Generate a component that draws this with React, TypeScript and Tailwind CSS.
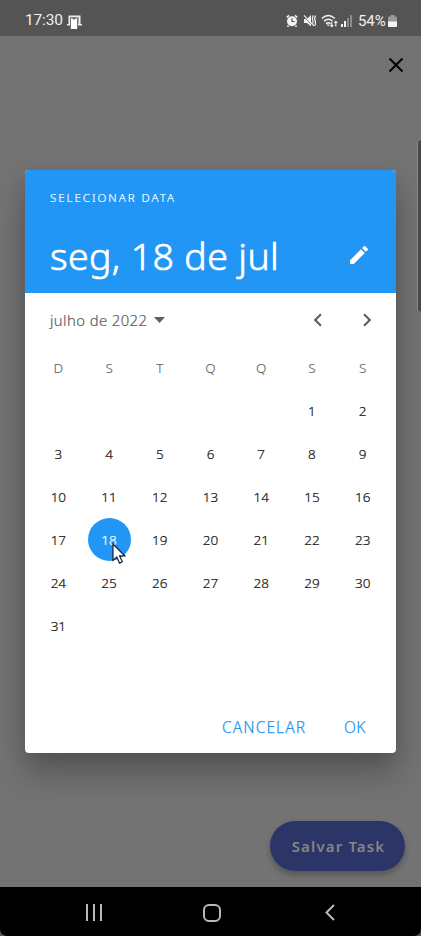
import React from "react";

const weekDays = ["D", "S", "T", "Q", "Q", "S", "S"];
const cells: (number | null)[] = [
  ...Array(5).fill(null),
  ...Array.from({ length: 31 }, (_, i) => i + 1),
];

function StatusBar() {
  return (
    <header className="flex h-9 items-center bg-[#545454] pt-[6px] font-['Roboto',sans-serif] text-[15.5px] leading-none text-[#f0f0f0]">
      <span className="ml-[25px] w-[37px] whitespace-nowrap tracking-[-0.15px]">17:30</span>
      <svg className="ml-[5px] mt-[3px] h-[15px] w-[15px]" viewBox="0 0 15 15">
        <path d="M1.500 .5h12v8.500H15v1.500H0V9h1.500z" fill="#eee" />
        <path d="M3 2h9v7H3z" fill="#b5b5b5" />
        <path d="M3 2.500h8V15H3z" fill="#545454" />
        <path d="M3.800 3.300h1.800v1h2.800v-1h1.800v10.800H3.800z" fill="#fff" />
      </svg>
      <svg className="ml-auto h-[14px] w-[12px]" viewBox="0 0 12 14">
        <circle cx="6" cy="7.3" r="5" fill="#f4f4f4" />
        <path d="M.8 3.4 3 1.4M11.2 3.4 9 1.4M2.5 11.5l-1 1.3M9.5 11.5l1 1.3" stroke="#f4f4f4" strokeWidth="1.6" />
        <path d="M6 4.3v3.2h2.6" stroke="#545454" strokeWidth="1.2" fill="none" />
      </svg>
      <svg className="ml-[5px] h-[14px] w-[13px]" viewBox="0 0 13 14" fill="none" stroke="#f4f4f4">
        <path d="M1 5h3l4-4v11.500L4 9H1z" fill="#f4f4f4" stroke="none" />
        <path d="M.5 2.200l9.500 9.500" stroke="#545454" strokeWidth="1" />
        <path d="M1 1.300l10 10.500" strokeWidth="1.2" />
        <path d="M9.500 1.500c1.500 1.300-.7 2.500 0 4s1.200 2.500 0 4M12 1.500c1 1.300-1 2.500-.2 4s1 3.500 0 6.500" strokeWidth="1.200" />
      </svg>
      <svg className="ml-[5px] h-[14px] w-[17px]" viewBox="0 0 17 14" fill="none" stroke="#f4f4f4" strokeWidth="1.4">
        <path d="M.8 4.500Q7.300-1.500 13.800 4.500M3 7.200q4.300-4 8.600 0M5 9.800q2.300-2.200 4.600 0" />
        <path d="M5.500 10.500h3.200L7.300 12.200z" fill="#f4f4f4" stroke="none" />
        <path d="M10.800 8v4.500M9.300 11l1.500 1.700 1.500-1.700M14.800 12.500V7.500M13.300 9l1.500-1.700 1.500 1.700" strokeWidth="1.100" />
      </svg>
      <svg className="ml-[3px] mr-[6px] h-[12px] w-[11px]" viewBox="0 0 11 12" fill="#8b8b8b">
        <path d="M0 9h2v3H0zM3 6h2v6H3z" fill="#f4f4f4" />
        <path d="M6 3h2v9H6zM9 0h2v12H9z" />
      </svg>
      <span className="w-[29px] whitespace-nowrap text-[15px] tracking-[-0.1px]">54%</span>
      <svg className="mr-[24px] ml-px h-[12px] w-[9px]" viewBox="0 0 9 12">
        <path d="M2.5 0h4v1.5H8q1 0 1 1V7H0V2.500q0-1 1-1h1.500z" fill="#999" />
        <path d="M0 6.500h9V11q0 1-1 1H1q-1 0-1-1z" fill="#f4f4f4" />
      </svg>
    </header>
  );
}

function DateHeader() {
  return (
    <div className="h-[123px] bg-[#2296f5] pl-[25px] text-white">
      <p className="pt-[20px] text-[11.5px] font-light leading-4 tracking-[1.98px] [-webkit-text-stroke:0.2px]">SELECIONAR DATA</p>
      <div className="mt-[22px] flex h-[56px] items-center">
        <h1 className="w-[230px] whitespace-nowrap text-[37.5px] font-light leading-[56px] tracking-[0.35px] [-webkit-text-stroke:0.7px]">seg, 18 de jul</h1>
        <svg className="mb-[3px] ml-[67px] h-6 w-6" viewBox="0 0 24 24" fill="currentColor">
          <path d="M3 17.250V21h3.750L17.810 9.940l-3.750-3.750zM20.710 7.040a1 1 0 0 0 0-1.410l-2.340-2.340a1 1 0 0 0-1.410 0l-1.830 1.830 3.750 3.750z" />
        </svg>
      </div>
    </div>
  );
}

function Calendar() {
  return (
    <>
      <div className="flex h-[53px] items-center pl-[25px] text-[#606060]">
        <span className="mt-[2px] w-[99px] whitespace-nowrap text-[14.8px] font-light tracking-[0.42px] [-webkit-text-stroke:0.2px]">julho de 2022</span>
        <svg className="ml-[5px] h-[6px] w-[11px]" viewBox="0 0 11 6" fill="currentColor"><path d="M0 0h11L5.500 6z" /></svg>
        <svg className="ml-[140px] h-[26px] w-[26px]" viewBox="0 0 24 24" fill="currentColor">
          <path d="M15.410 7.410 14 6l-6 6 6 6 1.410-1.410L10.830 12z" />
        </svg>
        <svg className="ml-[23px] h-[26px] w-[26px]" viewBox="0 0 24 24" fill="currentColor">
          <path d="M10 6 8.590 7.410 13.170 12l-4.580 4.590L10 18l6-6z" />
        </svg>
      </div>
      <div className="ml-[8px] grid w-[355px] grid-cols-7 auto-rows-[43px] text-center text-[13.5px] font-light leading-[44px] text-[#151515] [-webkit-text-stroke:0.22px]">
        {weekDays.map((day, i) => <span key={i} className="text-[#606060] [-webkit-text-stroke:0.1px]">{day}</span>)}
        {cells.map((day, i) => (
          <div key={i} className="flex justify-center">
            {day === 18 ? (
              <span className="relative h-[43px] w-[43px] rounded-full bg-[#2296f5] text-white">
                18
                <svg className="absolute left-[24px] top-[25px] h-[21px] w-[14px]" viewBox="0 0 14 21">
                  <path d="M1 1v16.500l3.800-3.400 2.700 6 2.800-1.300-2.700-5.900h5.100z" fill="#fff" stroke="#16202b" strokeWidth="1.200" />
                </svg>
              </span>
            ) : day}
          </div>
        ))}
      </div>
    </>
  );
}

export default function App() {
  return (
    <div className="relative flex h-[936px] w-[421px] flex-col overflow-hidden bg-[#737373] font-['Noto_Sans','Open_Sans',sans-serif]">
      <StatusBar />
      <main className="flex flex-1 flex-col">
        <svg className="ml-[388px] mt-[21px] h-[16px] w-[16px] shrink-0" viewBox="0 0 16 16" fill="none" stroke="#000" strokeWidth="2">
          <path d="m1.500 1.500 13 13M14.500 1.500l-13 13" />
        </svg>
        <section className="ml-[25px] mt-[97px] flex h-[583px] w-[371px] shrink-0 flex-col overflow-hidden rounded-[4px] bg-white shadow-[0_20px_32px_rgba(0,0,0,0.26),0_4px_18px_rgba(0,0,0,0.08)]">
          <DateHeader />
          <Calendar />
          <footer className="mb-[9px] mt-auto flex h-8 items-center pl-[197px] text-[15.5px] font-light text-[#2296f5] [-webkit-text-stroke:0.25px]">
            <button className="w-[85px] whitespace-nowrap text-left tracking-[1.1px]">CANCELAR</button>
            <button className="ml-[37px] whitespace-nowrap tracking-[0.3px]">OK</button>
          </footer>
        </section>
        <button className="ml-[270px] mt-[68px] h-[50px] w-[135px] shrink-0 whitespace-nowrap rounded-full bg-[#2b3567] pl-[2px] pt-px text-[15px] font-semibold tracking-[1.150px] text-[#858585] shadow-[0_4px_6px_rgba(0,0,0,0.25)]">Salvar Task</button>
      </main>
      <div className="absolute left-[417px] top-[139px] h-[174px] w-[6px] rounded-l-[4px] border border-[#888] bg-[#484848]" />
      <nav className="h-[49px] shrink-0 bg-[#555]">
        <div className="flex h-full items-center rounded-b-[7px] bg-black pt-[2px]">
          <svg className="ml-[86px] h-[17px] w-[16px]" viewBox="0 0 16 17" fill="#b9b9b9"><path d="M0 0h2v17H0zM7 0h2v17H7zM14 0h2v17h-2z" /></svg>
          <svg className="ml-[101px] h-[18px] w-[18px]" viewBox="0 0 18 18" fill="none" stroke="#b9b9b9" strokeWidth="2"><rect x="1" y="1" width="16" height="16" rx="5" /></svg>
          <svg className="ml-[104px] h-[17px] w-[10px]" viewBox="0 0 10 17" fill="none" stroke="#b9b9b9" strokeWidth="2"><path d="M9 1 1.500 8.500 9 16" /></svg>
        </div>
      </nav>
    </div>
  );
}
